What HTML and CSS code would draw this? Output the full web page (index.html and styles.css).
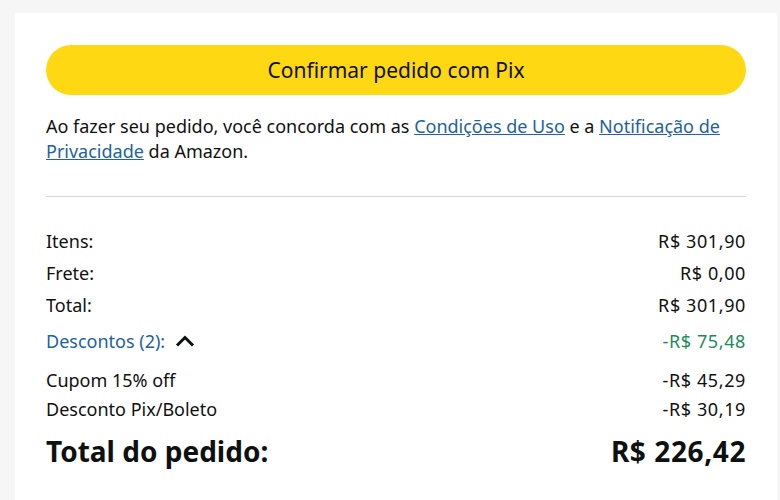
FILE: index.html
```html
<!DOCTYPE html>
<html lang="pt-BR">
<head>
    <meta charset="UTF-8">
    <title>Resumo do pedido</title>
    <link rel="stylesheet" href="styles.css">
</head>
<body>
<div class="card">
    <div class="place-order">Confirmar pedido com Pix</div>
    <p class="terms">
        Ao fazer seu pedido, você concorda com as <a href="#">Condições de Uso</a> e a <a href="#">Notificação de</a>
        <a href="#">Privacidade</a> da Amazon.
    </p>
    <hr class="divider">
    <div class="summary">
        <div class="row"><span>Itens:</span><span class="amount">R$ 301,90</span></div>
        <div class="row"><span>Frete:</span><span class="amount">R$ 0,00</span></div>
        <div class="row"><span>Total:</span><span class="amount">R$ 301,90</span></div>
        <div class="row discounts">
            <span class="toggle">Descontos (2):
                <svg class="chevron" width="20" height="12" viewBox="0 0 20 12">
                    <path d="M2 10.5 L10 2.5 L18 10.5" fill="none" stroke="#0f1111" stroke-width="3"/>
                </svg>
            </span>
            <span class="amount saving">-R$ 75,48</span>
        </div>
        <div class="row sub"><span>Cupom 15% off</span><span class="amount">-R$ 45,29</span></div>
        <div class="row sub"><span>Desconto Pix/Boleto</span><span class="amount">-R$ 30,19</span></div>
        <div class="row grand"><span>Total do pedido:</span><span class="amount">R$ 226,42</span></div>
    </div>
</div>
</body>
</html>
```

FILE: styles.css
```css
body {
    margin: 0;
    padding: 13px 0 0 15px;
    background-color: #f6f6f6;
    font-family: "Noto Sans", sans-serif;
    color: #0f1111;
    overflow: hidden;
}
.card {
    width: 700px;
    min-height: 455px;
    padding: 32px 31px 0 31px;
    background-color: #fff;
}
.place-order {
    height: 50px;
    line-height: 50px;
    border-radius: 25px;
    text-align: center;
    font-size: 21px;
    background-color: #ffd814;
    cursor: pointer;
}
.terms {
    margin: 19px 0 0 0;
    font-size: 18px;
    line-height: 25px;
}
.terms a {
    color: #2162a1;
    text-decoration: underline;
}
.divider {
    margin: 32px 0 0 0;
    border: 0;
    border-top: 1px solid #d5d9d9;
}
.summary {
    padding-top: 32px;
}
.row {
    display: flex;
    justify-content: space-between;
    font-size: 18px;
    line-height: 24px;
    margin-bottom: 8px;
}
.amount {
    letter-spacing: 0.6px;
}
.discounts {
    margin-top: 12px;
    margin-bottom: 15px;
}
.toggle {
    color: #2162a1;
    display: flex;
    align-items: center;
    gap: 10px;
}
.saving {
    color: #1c8a5e;
}
.sub {
    margin-bottom: 5px;
}
.grand {
    margin-top: 12px;
    font-size: 28px;
    line-height: 36px;
    font-weight: bold;
}
```
